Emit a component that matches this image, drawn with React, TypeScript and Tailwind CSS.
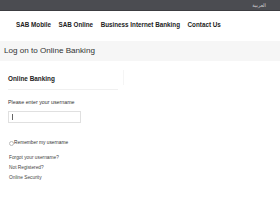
export default function App() {
  const links = ["Forgot your username?", "Not Registered?", "Online Security"];

  return (
    <div className="w-[280px] h-[210px] bg-white overflow-hidden font-['Liberation_Sans',Arial,sans-serif]">
      {/* Top bar */}
      <div className="h-[11px] bg-[#4b4c51] border-b border-[#3c3d41] flex items-center justify-end pr-[14px]">
        <span dir="rtl" className="text-[5px] leading-none text-[#d8d8da] font-['DejaVu_Sans',sans-serif]">
          العربية
        </span>
      </div>

      {/* Main nav */}
      <nav className="h-[30px] flex items-start pt-[10px] pl-[16px] gap-[7.5px]">
        {["SAB Mobile", "SAB Online", "Business Internet Banking", "Contact Us"].map((item) => (
          <a key={item} className="text-[6.3px] leading-[7px] font-bold text-[#222] whitespace-nowrap">
            {item}
          </a>
        ))}
      </nav>

      {/* Page title */}
      <div className="h-[20px] bg-[#f6f6f6] flex items-center pl-[4px]">
        <h1 className="text-[8.1px] leading-none text-[#333]">Log on to Online Banking</h1>
      </div>

      {/* Login panel */}
      <div className="pl-[8px] pt-[12px] flex">
        <div className="w-[110px]">
          <h2 className="text-[6.4px] leading-[7px] font-bold text-[#222] pt-[2px]">Online Banking</h2>
          <div className="mt-[7px] h-px bg-[#f0f0f0]" />
          <p className="mt-[9px] text-[5.3px] leading-[6px] text-[#333]">Please enter your username</p>
          <div className="mt-[6px] w-[73px] h-[12px] border border-[#e0e0e0] flex items-center pl-[3px]">
            <span className="w-px h-[6px] bg-[#666]" />
          </div>
          <label className="mt-[17px] flex items-center text-[4.8px] leading-[6px] text-[#333]">
            <span className="w-[5px] h-[5px] ml-[1px] rounded-full border border-[#bbbbbb] bg-white" />
            Remember my username
          </label>
          <div className="mt-[9px] flex flex-col gap-[4px] pl-[1px]">
            {links.map((l) => (
              <a key={l} className="text-[4.8px] leading-[6px] text-[#444]">
                {l}
              </a>
            ))}
          </div>
        </div>
        <div className="ml-[5px] mt-[-3px] w-px h-[15px] bg-[#f5f5f5]" />
      </div>
    </div>
  );
}
